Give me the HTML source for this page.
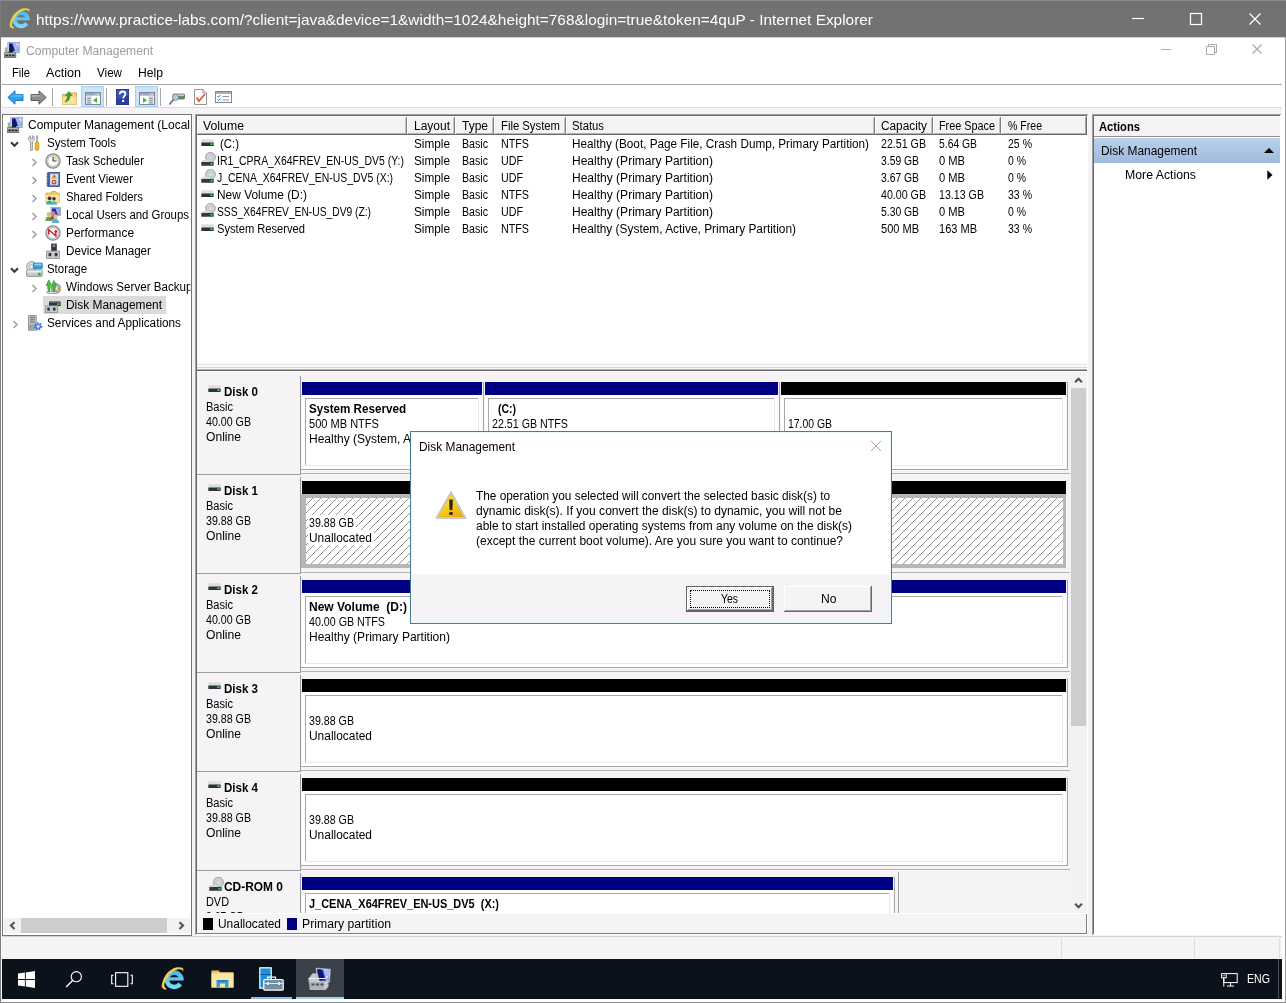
<!DOCTYPE html>
<html lang="en"><head><meta charset="utf-8"><title>Computer Management - Disk Management</title>
<style>
html,body{margin:0;padding:0}
body{width:1286px;height:1003px;position:relative;overflow:hidden;background:#fff;font-family:"Liberation Sans",sans-serif;font-size:12px;color:#000}
#r div,#r span,#r svg{position:absolute}
#r{position:absolute;left:0;top:0;width:1286px;height:1003px;overflow:hidden;will-change:transform}
.t{white-space:pre;line-height:20px;height:20px;transform-origin:0 50%}
</style></head>
<body><div id="r">
<div style="left:0px;top:0px;width:1286px;height:37px;background:#727272;"></div>
<div style="left:0px;top:0px;width:1286px;height:1px;background:#8a8a8a;"></div>
<div style="left:0px;top:37px;width:1286px;height:1px;background:#d2d2d2;"></div>
<div style="left:2px;top:108px;width:1280px;height:851px;background:#f5f3f5;"></div>
<div style="left:2px;top:84px;width:1280px;height:1px;background:#a5a5a5;"></div>
<div style="left:2px;top:107px;width:1280px;height:1px;background:#dcdcdc;"></div>
<div style="left:0px;top:0px;width:1px;height:1003px;background:#7d7d7d;"></div>
<div style="left:1285px;top:37px;width:1px;height:966px;background:#9a9a9a;"></div>
<div style="left:0px;top:1002px;width:1286px;height:1px;background:#8f8f8f;"></div>
<svg style="left:8.6px;top:7px" width="22" height="22" viewBox="0 0 24 24"><defs><linearGradient id="ieg1" x1="0" y1="0" x2="0" y2="1"><stop offset="0" stop-color="#46b2ec"/><stop offset="1" stop-color="#7ddffb"/></linearGradient></defs><path fill-rule="evenodd" d="M20.980 19.150A9.500 9.500 0 1 1 22.670 14.500H8.260A5 5 0 0 0 17.300 16.570ZM8.810 11.300A5 5 0 0 1 17.590 11.300Z" fill="url(#ieg1)"/><path d="M4.600 23.800C1.500 23 0 21 .9 18.300 2 13 4 10 5.500 8.100 9 4 14 1 17.300 1.400 20 1.200 22.500 2 22.400 3.600L22 5.800C21.800 4 20.500 3 18 3.200 14 3.600 10 6.500 7.800 9.700 5 13.500 3.500 16 3.300 18.500 3.100 20.500 3.800 22 5.800 22.400Z" fill="#f0cf4a"/></svg>
<span class="t" style="left:36px;top:10.3px;font-size:15px;color:#fff;transform:scaleX(1.0267);">https://www.practice-labs.com/?client=java&amp;device=1&amp;width=1024&amp;height=768&amp;login=true&amp;token=4quP - Internet Explorer</span>
<svg style="left:1128px;top:8px" width="20" height="20" viewBox="0 0 20 20"><path d="M4 10.500h12" stroke="#fff" stroke-width="1.200" fill="none"/></svg>
<svg style="left:1186px;top:9px" width="20" height="20" viewBox="0 0 20 20"><rect x="4.500" y="4.500" width="11" height="11" stroke="#fff" stroke-width="1.200" fill="none"/></svg>
<svg style="left:1245px;top:9px" width="20" height="20" viewBox="0 0 20 20"><path d="M4.500 4.500l11 11M15.500 4.500l-11 11" stroke="#fff" stroke-width="1.200" fill="none"/></svg>
<span class="t" style="left:26px;top:41px;color:#9c9c9c;transform:scaleX(1.0073);">Computer Management</span>
<svg style="left:1156px;top:40px" width="20" height="20" viewBox="0 0 20 20"><path d="M5 9.500h10" stroke="#b0b0b0" stroke-width="1" fill="none"/></svg>
<svg style="left:1201px;top:39px" width="20" height="20" viewBox="0 0 20 20"><path d="M5.500 7.500h8v8h-8zM7.500 7.500v-2h8v8h-2" stroke="#a8a8a8" stroke-width="1" fill="none"/></svg>
<svg style="left:1247px;top:39px" width="20" height="20" viewBox="0 0 20 20"><path d="M5.500 5.500l9 9M14.500 5.500l-9 9" stroke="#a8a8a8" stroke-width="1.150" fill="none"/></svg>
<svg style="left:4px;top:42.3px" width="16" height="16" viewBox="0 0 16 16"><rect x="3.800" y="0.400" width="12" height="10.200" fill="#d3dbee" stroke="#98a2ba" stroke-width=".8"/><rect x="5.200" y="1.600" width="9.400" height="7.600" fill="#2236c4"/><path d="M8.600 1.600h6v7.600h-3.600z" fill="#a4b8f0"/><path d="M11.500 1.600h3.100v3.500z" fill="#dfe7fb"/><path d="M5.200 1.600h2.600l2 5-2.600 2.600h-2z" fill="#0a1684"/><path d="M9.800 7.200C7 8 4.500 9.300 3 11.200h5.500c.2-1.400.9-2.500 2.300-3.200z" fill="#1a1c22"/><rect x="0.800" y="5.400" width="2.400" height="5.400" fill="#9db592"/><rect x="0.300" y="10.800" width="11.500" height="4.900" fill="#8d939b" stroke="#5c626a" stroke-width=".7"/><path d="M0.700 11.400h10.700" stroke="#c8ccd2" stroke-width=".8"/><rect x="1.600" y="12.600" width="2.200" height="1.600" fill="#23262c"/><rect x="4.900" y="12.600" width="2.200" height="1.600" fill="#23262c"/><rect x="8.200" y="12.600" width="2.200" height="1.600" fill="#23262c"/></svg>
<svg style="left:7px;top:90px" width="17" height="15" viewBox="0 0 17 15"><path d="M8 0.800v3.700h8v6H8v3.700L0.800 7.500z" fill="#2ea3ee" stroke="#1c78c8" stroke-width="1" stroke-linejoin="round"/><path d="M8 4.800h7.500v2H3.500z" fill="#7fd0ff" opacity=".55"/></svg>
<svg style="left:30px;top:90px" width="17" height="15" viewBox="0 0 17 15"><path d="M9 0.800v3.700h-8v6h8v3.700l7.200-6.700z" fill="#8e8e8e" stroke="#5c5c5c" stroke-width="1" stroke-linejoin="round"/><path d="M1.500 4.800h8v2h-8z" fill="#c4c4c4" opacity=".55"/></svg>
<div style="left:52px;top:88px;width:1px;height:18px;background:#a8a8a8;"></div>
<svg style="left:62px;top:91px" width="15" height="14" viewBox="0 0 15 14"><path d="M0.500 3.500h5l1.500-1.500h7.500v11.500h-14z" fill="#f3d679" stroke="#c9a545" stroke-width=".9"/><path d="M0.500 6h14v7.500h-14z" fill="#f7e3a0"/><path d="M3 11c3.500-.5 5-3 5-6.500l2.200 0-3.400-4-3.400 4h2c0 2.500-.8 4.500-2.400 6.500z" fill="#3aa63a" stroke="#1f7a1f" stroke-width=".5"/></svg>
<div style="left:81px;top:86px;width:23px;height:21px;background:#cce4f7;box-shadow:0 0 0 1px #a6d0f0 inset;"></div>
<svg style="left:85px;top:92px" width="16" height="13" viewBox="0 0 16 13"><rect x="0.500" y="0.500" width="15" height="12" fill="#fff" stroke="#7f8a96" stroke-width="1"/><rect x="1" y="1" width="14" height="2.600" fill="#9aa7b6"/><path d="M10.500 2h1M12.500 2h1.500" stroke="#fff" stroke-width="1"/><rect x="2" y="5" width="4" height="6.500" fill="#e6eaee" stroke="#8a95a2" stroke-width=".6"/><path d="M2.800 6.500h2.400M2.800 8.300h2.400M2.800 10.100h2.400" stroke="#6a7684" stroke-width=".8"/><path d="M12 5.500v5.500l-4-2.750z" fill="#3db53d"/></svg>
<div style="left:106px;top:88px;width:1px;height:18px;background:#a8a8a8;"></div>
<svg style="left:116px;top:89px" width="13" height="16" viewBox="0 0 13 16"><rect x="0.400" y="0.400" width="12.200" height="15.200" fill="#2b3ea6" stroke="#1a2870" stroke-width=".8"/><path d="M0.800 0.800h11.400v6l-11.400 3z" fill="#4a62c8" opacity=".6"/><path d="M3.800 5.200c0-1.800 1.200-2.700 2.800-2.700s2.800 1 2.800 2.500c0 2-2.200 2.100-2.200 4.400" stroke="#fff" stroke-width="1.800" fill="none"/><rect x="6.100" y="11" width="2" height="2" fill="#fff"/></svg>
<div style="left:135px;top:86px;width:23px;height:21px;background:#cce4f7;box-shadow:0 0 0 1px #a6d0f0 inset;"></div>
<svg style="left:139px;top:92px" width="16" height="13" viewBox="0 0 16 13"><rect x="0.500" y="0.500" width="15" height="12" fill="#fff" stroke="#7f8a96" stroke-width="1"/><rect x="1" y="1" width="14" height="2.600" fill="#9aa7b6"/><path d="M10.500 2h1M12.500 2h1.500" stroke="#fff" stroke-width="1"/><rect x="10" y="5" width="4" height="6.500" fill="#e6eaee" stroke="#8a95a2" stroke-width=".6"/><path d="M10.800 6.500h2.400M10.800 8.300h2.400M10.800 10.100h2.400" stroke="#6a7684" stroke-width=".8"/><path d="M4 5.500v5.500l4-2.750z" fill="#3db53d"/></svg>
<div style="left:160px;top:88px;width:1px;height:18px;background:#a8a8a8;"></div>
<svg style="left:169px;top:93px" width="16" height="12" viewBox="0 0 16 12"><rect x="4" y="1" width="11.500" height="5" rx=".8" fill="#6f7a74" stroke="#4a524e" stroke-width=".6"/><rect x="4.500" y="1.400" width="10.500" height="1.600" fill="#c9cfcc"/><rect x="11.500" y="3.400" width="2.600" height="1.800" fill="#29c229"/><circle cx="6.500" cy="4.500" r="3" fill="#cfe4f4" fill-opacity=".75" stroke="#7a8a96" stroke-width="1"/><path d="M4.300 6.800L0.800 11" stroke="#5a6670" stroke-width="1.500" stroke-linecap="round"/></svg>
<svg style="left:194px;top:89px" width="13" height="16" viewBox="0 0 13 16"><path d="M0.500 0.500h8.500l3.500 3.500v11.500h-12z" fill="#fff" stroke="#8a8a8a" stroke-width=".9"/><path d="M9 0.500v3.500h3.500" fill="#e8e8e8" stroke="#8a8a8a" stroke-width=".8"/><path d="M2.500 8.500l2.500 3.500 6-7" stroke="#e0552a" stroke-width="1.700" fill="none"/></svg>
<svg style="left:215px;top:91px" width="17" height="12" viewBox="0 0 17 12"><rect x="0.500" y="0.500" width="16" height="11" fill="#fff" stroke="#7f8a96" stroke-width="1"/><rect x="1" y="1" width="15" height="1.800" fill="#9aa7b6"/><path d="M2.500 5l1 1.200 1.800-2.200M2.500 8.500l1 1.200 1.800-2.200" stroke="#2c6fd0" stroke-width="1" fill="none"/><path d="M7.500 5.500h6.500M7.500 9h6.500" stroke="#8a95a2" stroke-width="1"/></svg>
<span class="t" style="left:12px;top:63px;transform:scaleX(0.9305);">File</span>
<span class="t" style="left:46px;top:63px;transform:scaleX(1.0492);">Action</span>
<span class="t" style="left:97px;top:63px;transform:scaleX(0.9691);">View</span>
<span class="t" style="left:138px;top:63px;transform:scaleX(1.0127);">Help</span>
<div style="left:2px;top:114px;width:190px;height:822px;background:#747474;"></div>
<div style="left:3px;top:115px;width:188px;height:820px;background:#fff;"></div>
<div style="left:195px;top:114px;width:893px;height:821px;background:#a0a0a0;"></div>
<div style="left:196px;top:115px;width:892px;height:820px;background:#fff;"></div>
<div style="left:196px;top:115px;width:891px;height:819px;background:#696969;"></div>
<div style="left:197px;top:116px;width:890px;height:818px;background:#fff;"></div>
<div style="left:1092px;top:114px;width:189px;height:821px;background:#a0a0a0;"></div>
<div style="left:1093px;top:115px;width:188px;height:820px;background:#fff;"></div>
<div style="left:1093px;top:115px;width:187px;height:819px;background:#696969;"></div>
<div style="left:1094px;top:116px;width:186px;height:818px;background:#fff;"></div>
<div style="left:1281px;top:114px;width:4px;height:822px;background:#fff;"></div>
<span class="t" style="left:28px;top:114.5px;transform:scaleX(0.9994);clip-path:inset(0 0.0px 0 0);">Computer Management (Local</span>
<svg style="left:7px;top:117.0px" width="16" height="16" viewBox="0 0 16 16"><rect x="3.800" y="0.400" width="12" height="10.200" fill="#d3dbee" stroke="#98a2ba" stroke-width=".8"/><rect x="5.200" y="1.600" width="9.400" height="7.600" fill="#2236c4"/><path d="M8.600 1.600h6v7.600h-3.600z" fill="#a4b8f0"/><path d="M11.500 1.600h3.100v3.500z" fill="#dfe7fb"/><path d="M5.200 1.600h2.600l2 5-2.600 2.600h-2z" fill="#0a1684"/><path d="M9.800 7.200C7 8 4.500 9.300 3 11.200h5.500c.2-1.400.9-2.500 2.300-3.200z" fill="#1a1c22"/><rect x="0.800" y="5.400" width="2.400" height="5.400" fill="#9db592"/><rect x="0.300" y="10.800" width="11.500" height="4.900" fill="#8d939b" stroke="#5c626a" stroke-width=".7"/><path d="M0.700 11.400h10.700" stroke="#c8ccd2" stroke-width=".8"/><rect x="1.600" y="12.600" width="2.200" height="1.600" fill="#23262c"/><rect x="4.900" y="12.600" width="2.200" height="1.600" fill="#23262c"/><rect x="8.200" y="12.600" width="2.200" height="1.600" fill="#23262c"/></svg>
<span class="t" style="left:47px;top:132.5px;transform:scaleX(0.9699);">System Tools</span>
<svg style="left:28px;top:135.0px" width="12" height="16" viewBox="0 0 12 16"><path d="M2.600 15.300V6.800C1.300 6.200.6 5 .6 3.600.6 2.300 1.300 1.200 2.400.7v3h2.200v-3c1.100.5 1.800 1.600 1.800 2.900 0 1.400-.7 2.600-2 3.200v8.500z" fill="#e4e6e8" stroke="#7c8288" stroke-width=".8"/><rect x="8.300" y="0.500" width="1.400" height="7" fill="#8c9298"/><rect x="7.200" y="7" width="3.600" height="8.300" rx="1.200" fill="#f2b818" stroke="#b58608" stroke-width=".7"/></svg>
<svg style="left:9px;top:138.5px" width="11" height="11" viewBox="0 0 11 11"><path d="M2 3.300l3.500 3.500 3.500-3.500" stroke="#383838" stroke-width="2.100" fill="none"/></svg>
<span class="t" style="left:66px;top:150.5px;transform:scaleX(0.9507);">Task Scheduler</span>
<svg style="left:45px;top:153.0px" width="16" height="16" viewBox="0 0 16 16"><circle cx="8" cy="8" r="7.100" fill="#dfe1e4" stroke="#858a90" stroke-width="1.300"/><circle cx="8" cy="8" r="5.300" fill="#fff" stroke="#a8adb4" stroke-width=".8"/><path d="M8 8V2.700A5.300 5.300 0 0 1 13.300 8z" fill="#f6dca6"/><path d="M8 3.800V8h3.400" stroke="#3a4048" stroke-width="1.100" fill="none"/></svg>
<svg style="left:28.5px;top:157.0px" width="11" height="11" viewBox="0 0 11 11"><path d="M3.500 2l3.500 3.500-3.500 3.500" stroke="#a2a2a2" stroke-width="1.600" fill="none"/></svg>
<span class="t" style="left:66px;top:168.5px;transform:scaleX(0.9506);">Event Viewer</span>
<svg style="left:46px;top:171.5px" width="14" height="15" viewBox="0 0 14 15"><rect x="1.800" y="0.500" width="11.700" height="14" fill="#4f74c4" stroke="#2c4a94" stroke-width=".8"/><rect x="4.200" y="1.800" width="8" height="11.400" fill="#dfe7f7"/><path d="M0.500 2.500h3M0.500 4.700h3M0.500 6.900h3M0.500 9.100h3M0.500 11.300h3M0.500 13.200h3" stroke="#46506a" stroke-width=".9"/><path d="M5 10h6.500M5 12h6.500" stroke="#8fa6d8" stroke-width=".7"/><path d="M8.200 2l2.600 4.600h-5.200z" fill="#f4cf2a" stroke="#b89612" stroke-width=".4"/><rect x="7.800" y="3.500" width=".9" height="2" fill="#222"/><rect x="6" y="8" width="4.200" height="4.200" rx=".8" fill="#d83a3a"/><path d="M7.100 9.100l2 2M9.100 9.100l-2 2" stroke="#fff" stroke-width=".8"/></svg>
<svg style="left:28.5px;top:175.0px" width="11" height="11" viewBox="0 0 11 11"><path d="M3.500 2l3.500 3.500-3.500 3.500" stroke="#a2a2a2" stroke-width="1.600" fill="none"/></svg>
<span class="t" style="left:66px;top:186.5px;transform:scaleX(0.9385);">Shared Folders</span>
<svg style="left:45px;top:190.0px" width="15" height="15" viewBox="0 0 15 15"><path d="M1 3.200h4.500l1.200-1.600h4l1 1.600h2.500v9.600H1z" fill="#f0cf72" stroke="#c29a3a" stroke-width=".8"/><path d="M1 5h13.200v7.800H1z" fill="#f8e09a"/><circle cx="4.600" cy="8.300" r="1.900" fill="#2e3e3e"/><path d="M1.200 14.600c0-2.600 1.500-3.800 3.400-3.800s3.400 1.200 3.400 3.800z" fill="#3aa89a"/><circle cx="9" cy="8.800" r="1.800" fill="#2e3e3e"/><path d="M5.800 14.800c0-2.400 1.400-3.600 3.200-3.600s3.200 1.200 3.200 3.600z" fill="#4ab8d8"/></svg>
<svg style="left:28.5px;top:193.0px" width="11" height="11" viewBox="0 0 11 11"><path d="M3.500 2l3.500 3.500-3.500 3.500" stroke="#a2a2a2" stroke-width="1.600" fill="none"/></svg>
<span class="t" style="left:66px;top:204.5px;transform:scaleX(0.9505);clip-path:inset(0 0.0px 0 0);">Local Users and Groups</span>
<svg style="left:45px;top:206.5px" width="16" height="16" viewBox="0 0 16 16"><rect x="6" y="0.500" width="9.500" height="8" fill="#c9d3e8" stroke="#8a93a8" stroke-width=".7"/><rect x="7" y="1.400" width="7.600" height="6.200" fill="#1c2fb0"/><path d="M10.500 1.400h4.100v6.200h-2z" fill="#9db4ec"/><circle cx="4" cy="7.200" r="2.200" fill="#e0b48a"/><path d="M0.300 14c0-3 1.600-4.400 3.700-4.400s3.700 1.400 3.700 4.400z" fill="#5aa84a"/><circle cx="8.300" cy="6.400" r="2.200" fill="#c88a6a"/><path d="M5 12.500c0-2.600 1.400-3.800 3.300-3.800s3.300 1.200 3.300 3.800z" fill="#8a5a4a"/><circle cx="10.500" cy="10" r="2.100" fill="#e8c4a0"/><path d="M6.800 16c0-2.800 1.600-4 3.700-4s3.700 1.200 3.700 4z" fill="#5ab0e0"/></svg>
<svg style="left:28.5px;top:211.0px" width="11" height="11" viewBox="0 0 11 11"><path d="M3.500 2l3.500 3.500-3.500 3.500" stroke="#a2a2a2" stroke-width="1.600" fill="none"/></svg>
<span class="t" style="left:66px;top:222.5px;transform:scaleX(0.9898);">Performance</span>
<svg style="left:45px;top:225.0px" width="16" height="16" viewBox="0 0 16 16"><circle cx="8" cy="8" r="7.100" fill="#e4e6e8" stroke="#858a90" stroke-width="1.300"/><circle cx="8" cy="8" r="5.300" fill="#fff" stroke="#a8adb4" stroke-width=".8"/><path d="M3.800 9.500V4.800l7 6V6.500" stroke="#d42222" stroke-width="1.500" fill="none" stroke-linejoin="miter"/><path d="M8.800 7.200l2-2.800 2 2.800z" fill="#d42222"/></svg>
<svg style="left:28.5px;top:229.0px" width="11" height="11" viewBox="0 0 11 11"><path d="M3.500 2l3.500 3.500-3.500 3.500" stroke="#a2a2a2" stroke-width="1.600" fill="none"/></svg>
<span class="t" style="left:66px;top:240.5px;transform:scaleX(0.9728);">Device Manager</span>
<svg style="left:46px;top:243.0px" width="14" height="16" viewBox="0 0 14 16"><rect x="5.200" y="0.600" width="5.600" height="8" fill="#2e3238"/><rect x="6.800" y="1.500" width="2.400" height="2.600" fill="#8a9098"/><rect x="0.600" y="8" width="12.800" height="7.400" fill="#c4c8cc" stroke="#8a8e94" stroke-width=".8"/><rect x="2.600" y="10" width="2.600" height="3.200" fill="#2e3238"/><rect x="8.800" y="10" width="2.600" height="3.200" fill="#2e3238"/></svg>
<span class="t" style="left:47px;top:258.5px;transform:scaleX(0.9517);">Storage</span>
<svg style="left:26px;top:261.0px" width="17" height="16" viewBox="0 0 17 16"><circle cx="5.600" cy="5.600" r="5.100" fill="#d4d6d8" stroke="#8e9296" stroke-width=".8"/><circle cx="5.600" cy="5.600" r="1.700" fill="#fff" stroke="#9a9ea2" stroke-width=".6"/><rect x="7.500" y="2" width="8.800" height="5.800" rx=".8" fill="#2f9fe0" stroke="#1a70b0" stroke-width=".7"/><rect x="8.200" y="2.600" width="7.400" height="1.800" fill="#8fd0f6"/><rect x="0.600" y="9" width="15.600" height="6.400" rx="1" fill="#c6cacc" stroke="#7e8286" stroke-width=".8"/><rect x="1.200" y="9.500" width="14.400" height="2" fill="#eceeee"/><rect x="12" y="11.800" width="2.600" height="2.600" fill="#3aa83a"/></svg>
<svg style="left:9px;top:264.5px" width="11" height="11" viewBox="0 0 11 11"><path d="M2 3.300l3.500 3.500 3.500-3.500" stroke="#383838" stroke-width="2.100" fill="none"/></svg>
<span class="t" style="left:66px;top:276.5px;transform:scaleX(0.9677);clip-path:inset(0 2.3px 0 0);">Windows Server Backup</span>
<svg style="left:45px;top:279.0px" width="16" height="16" viewBox="0 0 16 16"><circle cx="11" cy="9.500" r="4.800" fill="#b8bcc0" stroke="#70757a" stroke-width=".8"/><path d="M11 9.500l4.500-1.500a4.800 4.800 0 0 1-1 4.600z" fill="#e0a050"/><circle cx="11" cy="9.500" r="1.300" fill="#fff"/><path d="M2.500 14.500h9l1-2h-11z" fill="#d8dcde" stroke="#80858a" stroke-width=".6"/><path d="M1 6.500L3.800 1l2.400 4.500-1.200 0c.4 2.600.2 5-1 7.500-1-1.500-1.600-4-1.200-6.500z" fill="#4cbf3c" stroke="#248a1c" stroke-width=".6"/><path d="M6.300 7L9 1.500l2.400 4.500-1.200 0c.4 2.600.2 4.600-1 7-1-1.500-1.600-3.600-1.200-6z" fill="#4cbf3c" stroke="#248a1c" stroke-width=".6"/></svg>
<svg style="left:28.5px;top:283.0px" width="11" height="11" viewBox="0 0 11 11"><path d="M3.500 2l3.500 3.500-3.500 3.500" stroke="#a2a2a2" stroke-width="1.600" fill="none"/></svg>
<div style="left:43px;top:296.0px;width:123px;height:18px;background:#dbdbdb;"></div>
<span class="t" style="left:66px;top:294.5px;transform:scaleX(0.9926);">Disk Management</span>
<svg style="left:45px;top:301.0px" width="16" height="12" viewBox="0 0 16 12"><rect x="4" y="0.400" width="11.600" height="4.600" rx=".6" fill="#2c3034"/><rect x="4.600" y="0.900" width="10.400" height="1.200" fill="#5a6066"/><rect x="12" y="2.400" width="2.600" height="1.700" fill="#2fcf2f"/><rect x="0.500" y="4.800" width="12" height="6.800" fill="#c4c8cc" stroke="#8a8e94" stroke-width=".8"/><rect x="2.300" y="6.600" width="2.500" height="3" fill="#2e3238"/><rect x="8" y="6.600" width="2.500" height="3" fill="#2e3238"/></svg>
<span class="t" style="left:47px;top:312.5px;transform:scaleX(0.9799);">Services and Applications</span>
<svg style="left:28px;top:315.0px" width="15" height="16" viewBox="0 0 15 16"><rect x="0.600" y="0.600" width="7.600" height="14.600" fill="#c2c6ca" stroke="#7e8286" stroke-width=".8"/><path d="M2 2.600h4.800M2 4.800h4.800M2 7h4.800" stroke="#5e6468" stroke-width="1"/><rect x="1.200" y="9.500" width="6.400" height="5" fill="#9aa0a6"/><circle cx="10.200" cy="11.400" r="3" fill="none" stroke="#3d78d8" stroke-width="2.200" stroke-dasharray="1.500 1.050"/><circle cx="10.200" cy="11.400" r="2.400" fill="#6fa0ec" stroke="#3d78d8" stroke-width=".8"/><circle cx="10.200" cy="11.400" r="1.100" fill="#fff"/></svg>
<svg style="left:9.5px;top:319.0px" width="11" height="11" viewBox="0 0 11 11"><path d="M3.500 2l3.500 3.500-3.500 3.500" stroke="#a2a2a2" stroke-width="1.600" fill="none"/></svg>
<div style="left:4px;top:918px;width:186px;height:15px;background:#f3f1f3;"></div>
<div style="left:21px;top:918px;width:146px;height:15px;background:#cdcdcd;"></div>
<svg style="left:7px;top:920px" width="11" height="11" viewBox="0 0 11 11"><path d="M7.500 2.200l-3.600 3.400 3.600 3.400" stroke="#505050" stroke-width="2" fill="none"/></svg>
<svg style="left:176px;top:920px" width="11" height="11" viewBox="0 0 11 11"><path d="M3.500 2.200l3.600 3.400-3.600 3.400" stroke="#505050" stroke-width="2" fill="none"/></svg>
<div style="left:197px;top:116px;width:890px;height:18px;background:#f5f3f5;"></div>
<div style="left:197px;top:116px;width:890px;height:1px;background:#fff;"></div>
<div style="left:197px;top:116px;width:1px;height:18px;background:#fff;"></div>
<div style="left:197px;top:134px;width:890px;height:1px;background:#696969;"></div>
<div style="left:198px;top:133px;width:888px;height:1px;background:#b4b4b4;"></div>
<span class="t" style="left:203px;top:115.5px;transform:scaleX(1.0242);">Volume</span>
<span class="t" style="left:414px;top:115.5px;transform:scaleX(0.9991);">Layout</span>
<div style="left:405px;top:118px;width:1px;height:15px;background:#c4c4c4;"></div>
<div style="left:406px;top:117px;width:1px;height:17px;background:#808080;"></div>
<div style="left:407px;top:117px;width:1px;height:17px;background:#fff;"></div>
<span class="t" style="left:462px;top:115.5px;transform:scaleX(0.9994);">Type</span>
<div style="left:453px;top:118px;width:1px;height:15px;background:#c4c4c4;"></div>
<div style="left:454px;top:117px;width:1px;height:17px;background:#808080;"></div>
<div style="left:455px;top:117px;width:1px;height:17px;background:#fff;"></div>
<span class="t" style="left:501px;top:115.5px;transform:scaleX(0.9412);">File System</span>
<div style="left:492px;top:118px;width:1px;height:15px;background:#c4c4c4;"></div>
<div style="left:493px;top:117px;width:1px;height:17px;background:#808080;"></div>
<div style="left:494px;top:117px;width:1px;height:17px;background:#fff;"></div>
<span class="t" style="left:572px;top:115.5px;transform:scaleX(0.9403);">Status</span>
<div style="left:564px;top:118px;width:1px;height:15px;background:#c4c4c4;"></div>
<div style="left:565px;top:117px;width:1px;height:17px;background:#808080;"></div>
<div style="left:566px;top:117px;width:1px;height:17px;background:#fff;"></div>
<span class="t" style="left:881px;top:115.5px;transform:scaleX(0.9853);">Capacity</span>
<div style="left:873px;top:118px;width:1px;height:15px;background:#c4c4c4;"></div>
<div style="left:874px;top:117px;width:1px;height:17px;background:#808080;"></div>
<div style="left:875px;top:117px;width:1px;height:17px;background:#fff;"></div>
<span class="t" style="left:939px;top:115.5px;transform:scaleX(0.9025);">Free Space</span>
<div style="left:931px;top:118px;width:1px;height:15px;background:#c4c4c4;"></div>
<div style="left:932px;top:117px;width:1px;height:17px;background:#808080;"></div>
<div style="left:933px;top:117px;width:1px;height:17px;background:#fff;"></div>
<span class="t" style="left:1008px;top:115.5px;transform:scaleX(0.8788);">% Free</span>
<div style="left:999px;top:118px;width:1px;height:15px;background:#c4c4c4;"></div>
<div style="left:1000px;top:117px;width:1px;height:17px;background:#808080;"></div>
<div style="left:1001px;top:117px;width:1px;height:17px;background:#fff;"></div>
<div style="left:1085px;top:117px;width:1px;height:17px;background:#a8a8a8;"></div>
<div style="left:1086px;top:116px;width:1px;height:19px;background:#696969;"></div>
<span class="t" style="left:220px;top:133.5px;transform:scaleX(0.9500);">(C:)</span>
<svg style="left:200.8px;top:139.3px" width="13" height="8" viewBox="0 0 13 8"><rect x="0.300" y="0.200" width="12.400" height="3.800" rx=".6" fill="#dcdedf"/><rect x="0.300" y="3.500" width="12.400" height="3.400" rx=".4" fill="#2e3236"/><rect x="9.200" y="4.300" width="2.500" height="1.700" fill="#2fd42f"/></svg>
<span class="t" style="left:414px;top:133.5px;transform:scaleX(0.9813);">Simple</span>
<span class="t" style="left:462px;top:133.5px;transform:scaleX(0.8860);">Basic</span>
<span class="t" style="left:501px;top:133.5px;transform:scaleX(0.8933);">NTFS</span>
<span class="t" style="left:572px;top:133.5px;transform:scaleX(0.9787);">Healthy (Boot, Page File, Crash Dump, Primary Partition)</span>
<span class="t" style="left:881px;top:133.5px;transform:scaleX(0.8875);">22.51 GB</span>
<span class="t" style="left:939px;top:133.5px;transform:scaleX(0.8630);">5.64 GB</span>
<span class="t" style="left:1008px;top:133.5px;transform:scaleX(0.8772);">25 %</span>
<span class="t" style="left:217px;top:150.5px;transform:scaleX(0.8708);">IR1_CPRA_X64FREV_EN-US_DV5 (Y:)</span>
<svg style="left:201px;top:151.5px" width="15" height="15" viewBox="0 0 15 15"><circle cx="9.500" cy="5.300" r="4.900" fill="#d2d4d6" stroke="#8e9296" stroke-width=".8"/><circle cx="9.500" cy="5.300" r="2.400" fill="#eef0f0" stroke="#a2a6aa" stroke-width=".5"/><circle cx="9.500" cy="5.300" r="1" fill="#fff" stroke="#8e9296" stroke-width=".5"/><path d="M1.500 8h6l1.500 2.400h-9z" fill="#d6d8da"/><rect x="0.300" y="10" width="12.400" height="3.800" rx=".5" fill="#34383c"/><rect x="9.300" y="10.900" width="2.400" height="1.700" fill="#2fcf2f"/></svg>
<span class="t" style="left:414px;top:150.5px;transform:scaleX(0.9813);">Simple</span>
<span class="t" style="left:462px;top:150.5px;transform:scaleX(0.8860);">Basic</span>
<span class="t" style="left:501px;top:150.5px;transform:scaleX(0.8917);">UDF</span>
<span class="t" style="left:572px;top:150.5px;transform:scaleX(1.0021);">Healthy (Primary Partition)</span>
<span class="t" style="left:881px;top:150.5px;transform:scaleX(0.8630);">3.59 GB</span>
<span class="t" style="left:939px;top:150.5px;transform:scaleX(0.9281);">0 MB</span>
<span class="t" style="left:1008px;top:150.5px;transform:scaleX(0.8701);">0 %</span>
<span class="t" style="left:217px;top:167.5px;transform:scaleX(0.8681);">J_CENA_X64FREV_EN-US_DV5 (X:)</span>
<svg style="left:201px;top:168.5px" width="15" height="15" viewBox="0 0 15 15"><circle cx="9.500" cy="5.300" r="4.900" fill="#d2d4d6" stroke="#8e9296" stroke-width=".8"/><circle cx="9.500" cy="5.300" r="2.400" fill="#eef0f0" stroke="#a2a6aa" stroke-width=".5"/><circle cx="9.500" cy="5.300" r="1" fill="#fff" stroke="#8e9296" stroke-width=".5"/><path d="M1.500 8h6l1.500 2.400h-9z" fill="#d6d8da"/><rect x="0.300" y="10" width="12.400" height="3.800" rx=".5" fill="#34383c"/><rect x="9.300" y="10.900" width="2.400" height="1.700" fill="#2fcf2f"/></svg>
<span class="t" style="left:414px;top:167.5px;transform:scaleX(0.9813);">Simple</span>
<span class="t" style="left:462px;top:167.5px;transform:scaleX(0.8860);">Basic</span>
<span class="t" style="left:501px;top:167.5px;transform:scaleX(0.8917);">UDF</span>
<span class="t" style="left:572px;top:167.5px;transform:scaleX(1.0021);">Healthy (Primary Partition)</span>
<span class="t" style="left:881px;top:167.5px;transform:scaleX(0.8630);">3.67 GB</span>
<span class="t" style="left:939px;top:167.5px;transform:scaleX(0.9281);">0 MB</span>
<span class="t" style="left:1008px;top:167.5px;transform:scaleX(0.8701);">0 %</span>
<span class="t" style="left:217px;top:184.5px;transform:scaleX(0.9922);">New Volume (D:)</span>
<svg style="left:200.8px;top:190.3px" width="13" height="8" viewBox="0 0 13 8"><rect x="0.300" y="0.200" width="12.400" height="3.800" rx=".6" fill="#dcdedf"/><rect x="0.300" y="3.500" width="12.400" height="3.400" rx=".4" fill="#2e3236"/><rect x="9.200" y="4.300" width="2.500" height="1.700" fill="#2fd42f"/></svg>
<span class="t" style="left:414px;top:184.5px;transform:scaleX(0.9813);">Simple</span>
<span class="t" style="left:462px;top:184.5px;transform:scaleX(0.8860);">Basic</span>
<span class="t" style="left:501px;top:184.5px;transform:scaleX(0.8933);">NTFS</span>
<span class="t" style="left:572px;top:184.5px;transform:scaleX(1.0021);">Healthy (Primary Partition)</span>
<span class="t" style="left:881px;top:184.5px;transform:scaleX(0.8875);">40.00 GB</span>
<span class="t" style="left:939px;top:184.5px;transform:scaleX(0.8875);">13.13 GB</span>
<span class="t" style="left:1008px;top:184.5px;transform:scaleX(0.8772);">33 %</span>
<span class="t" style="left:217px;top:201.5px;transform:scaleX(0.8553);">SSS_X64FREV_EN-US_DV9 (Z:)</span>
<svg style="left:201px;top:202.5px" width="15" height="15" viewBox="0 0 15 15"><circle cx="9.500" cy="5.300" r="4.900" fill="#d2d4d6" stroke="#8e9296" stroke-width=".8"/><circle cx="9.500" cy="5.300" r="2.400" fill="#eef0f0" stroke="#a2a6aa" stroke-width=".5"/><circle cx="9.500" cy="5.300" r="1" fill="#fff" stroke="#8e9296" stroke-width=".5"/><path d="M1.500 8h6l1.500 2.400h-9z" fill="#d6d8da"/><rect x="0.300" y="10" width="12.400" height="3.800" rx=".5" fill="#34383c"/><rect x="9.300" y="10.900" width="2.400" height="1.700" fill="#2fcf2f"/></svg>
<span class="t" style="left:414px;top:201.5px;transform:scaleX(0.9813);">Simple</span>
<span class="t" style="left:462px;top:201.5px;transform:scaleX(0.8860);">Basic</span>
<span class="t" style="left:501px;top:201.5px;transform:scaleX(0.8917);">UDF</span>
<span class="t" style="left:572px;top:201.5px;transform:scaleX(1.0021);">Healthy (Primary Partition)</span>
<span class="t" style="left:881px;top:201.5px;transform:scaleX(0.8630);">5.30 GB</span>
<span class="t" style="left:939px;top:201.5px;transform:scaleX(0.9281);">0 MB</span>
<span class="t" style="left:1008px;top:201.5px;transform:scaleX(0.8701);">0 %</span>
<span class="t" style="left:217px;top:218.5px;transform:scaleX(0.9292);">System Reserved</span>
<svg style="left:200.8px;top:224.3px" width="13" height="8" viewBox="0 0 13 8"><rect x="0.300" y="0.200" width="12.400" height="3.800" rx=".6" fill="#dcdedf"/><rect x="0.300" y="3.500" width="12.400" height="3.400" rx=".4" fill="#2e3236"/><rect x="9.200" y="4.300" width="2.500" height="1.700" fill="#2fd42f"/></svg>
<span class="t" style="left:414px;top:218.5px;transform:scaleX(0.9813);">Simple</span>
<span class="t" style="left:462px;top:218.5px;transform:scaleX(0.8860);">Basic</span>
<span class="t" style="left:501px;top:218.5px;transform:scaleX(0.8933);">NTFS</span>
<span class="t" style="left:572px;top:218.5px;transform:scaleX(0.9909);">Healthy (System, Active, Primary Partition)</span>
<span class="t" style="left:881px;top:218.5px;transform:scaleX(0.9188);">500 MB</span>
<span class="t" style="left:939px;top:218.5px;transform:scaleX(0.9188);">163 MB</span>
<span class="t" style="left:1008px;top:218.5px;transform:scaleX(0.8772);">33 %</span>
<div style="left:197px;top:363px;width:890px;height:9px;background:#fbfafb;"></div>
<div style="left:197px;top:364px;width:890px;height:1px;background:#e6e6e6;"></div>
<div style="left:197px;top:367px;width:890px;height:1px;background:#d6d6d6;"></div>
<div style="left:197px;top:369px;width:890px;height:1px;background:#b0b0b0;"></div>
<div style="left:197px;top:370px;width:890px;height:1px;background:#696969;"></div>
<div style="left:197px;top:371px;width:890px;height:1px;background:#fff;"></div>
<div style="left:197px;top:372px;width:873px;height:542px;background:#f5f3f5;"></div>
<span class="t" style="left:224px;top:381.5px;font-weight:bold;transform:scaleX(0.9616);">Disk 0</span>
<svg style="left:208.3px;top:385px" width="13" height="8" viewBox="0 0 13 8"><rect x="0.300" y="0.200" width="12.400" height="3.800" rx=".6" fill="#dcdedf"/><rect x="0.300" y="3.500" width="12.400" height="3.400" rx=".4" fill="#2e3236"/><rect x="9.200" y="4.300" width="2.500" height="1.700" fill="#2fd42f"/></svg>
<span class="t" style="left:206px;top:396.5px;transform:scaleX(0.9201);">Basic</span>
<span class="t" style="left:206px;top:411.5px;transform:scaleX(0.8875);">40.00 GB</span>
<span class="t" style="left:206px;top:426.5px;transform:scaleX(1.0090);">Online</span>
<div style="left:300px;top:376px;width:1px;height:99px;background:#9c9c9c;"></div>
<div style="left:197px;top:474px;width:103px;height:1px;background:#9c9c9c;"></div>
<div style="left:302px;top:382px;width:180px;height:13px;background:#000084;"></div>
<div style="left:302px;top:395px;width:180px;height:74px;background:#fff;"></div>
<div style="left:305px;top:398px;width:174px;height:1px;background:#a8a8a8;"></div>
<div style="left:305px;top:398px;width:1px;height:68px;background:#a8a8a8;"></div>
<div style="left:305px;top:465px;width:174px;height:1px;background:#e8e8e8;"></div>
<div style="left:478px;top:398px;width:1px;height:68px;background:#e8e8e8;"></div>
<div style="left:483px;top:382px;width:1px;height:87px;background:#a8a8a8;"></div>
<div style="left:301px;top:469px;width:183px;height:1px;background:#a8a8a8;"></div>
<span class="t" style="left:309px;top:398.5px;font-weight:bold;transform:scaleX(0.9694);">System Reserved</span>
<span class="t" style="left:309px;top:413.5px;transform:scaleX(0.9207);">500 MB NTFS</span>
<span class="t" style="left:309px;top:428.5px;clip-path:inset(0 57.1px 0 0);">Healthy (System, Active, Primary Partition)</span>
<div style="left:485px;top:382px;width:293px;height:13px;background:#000084;"></div>
<div style="left:485px;top:395px;width:293px;height:74px;background:#fff;"></div>
<div style="left:488px;top:398px;width:287px;height:1px;background:#a8a8a8;"></div>
<div style="left:488px;top:398px;width:1px;height:68px;background:#a8a8a8;"></div>
<div style="left:488px;top:465px;width:287px;height:1px;background:#e8e8e8;"></div>
<div style="left:774px;top:398px;width:1px;height:68px;background:#e8e8e8;"></div>
<div style="left:779px;top:382px;width:1px;height:87px;background:#a8a8a8;"></div>
<div style="left:484px;top:469px;width:296px;height:1px;background:#a8a8a8;"></div>
<span class="t" style="left:498px;top:398.5px;font-weight:bold;transform:scaleX(0.8714);">(C:)</span>
<span class="t" style="left:492px;top:413.5px;transform:scaleX(0.8902);">22.51 GB NTFS</span>
<span class="t" style="left:492px;top:428.5px;clip-path:inset(0 21.4px 0 0);">Healthy (Boot, Page File, Crash Dump, Primary Partition)</span>
<div style="left:781px;top:382px;width:285px;height:13px;background:#000;"></div>
<div style="left:781px;top:395px;width:285px;height:74px;background:#fff;"></div>
<div style="left:784px;top:398px;width:279px;height:1px;background:#a8a8a8;"></div>
<div style="left:784px;top:398px;width:1px;height:68px;background:#a8a8a8;"></div>
<div style="left:784px;top:465px;width:279px;height:1px;background:#e8e8e8;"></div>
<div style="left:1062px;top:398px;width:1px;height:68px;background:#e8e8e8;"></div>
<div style="left:1067px;top:382px;width:1px;height:87px;background:#a8a8a8;"></div>
<div style="left:780px;top:469px;width:288px;height:1px;background:#a8a8a8;"></div>
<span class="t" style="left:788px;top:413.5px;transform:scaleX(0.8678);">17.00 GB</span>
<span class="t" style="left:788px;top:428.5px;transform:scaleX(0.9941);">Unallocated</span>
<div style="left:301px;top:473px;width:769px;height:1px;background:#b4b4b4;"></div>
<span class="t" style="left:224px;top:480.5px;font-weight:bold;transform:scaleX(0.9616);">Disk 1</span>
<svg style="left:208.3px;top:484px" width="13" height="8" viewBox="0 0 13 8"><rect x="0.300" y="0.200" width="12.400" height="3.800" rx=".6" fill="#dcdedf"/><rect x="0.300" y="3.500" width="12.400" height="3.400" rx=".4" fill="#2e3236"/><rect x="9.200" y="4.300" width="2.500" height="1.700" fill="#2fd42f"/></svg>
<span class="t" style="left:206px;top:495.5px;transform:scaleX(0.9201);">Basic</span>
<span class="t" style="left:206px;top:510.5px;transform:scaleX(0.8875);">39.88 GB</span>
<span class="t" style="left:206px;top:525.5px;transform:scaleX(1.0090);">Online</span>
<div style="left:300px;top:477px;width:1px;height:97px;background:#9c9c9c;"></div>
<div style="left:197px;top:573px;width:103px;height:1px;background:#9c9c9c;"></div>
<div style="left:302px;top:481px;width:764px;height:13px;background:#000;"></div>
<div style="left:302px;top:494px;width:764px;height:74px;background:#fff;"></div>
<div style="left:301px;top:494px;width:765px;height:74px;background:#b6b6b6;"></div>
<div style="left:305.5px;top:498px;width:757px;height:66px;background:#fff repeating-linear-gradient(135deg,#fff 0,#fff 4.700px,#969696 4.900px,#969696 5.500px,#fff 5.657px)"></div>
<div style="left:308px;top:515.0px;width:48px;height:15px;background:#fff;"></div>
<div style="left:308px;top:530.0px;width:66px;height:15px;background:#fff;"></div>
<span class="t" style="left:309px;top:512.5px;transform:scaleX(0.8875);">39.88 GB</span>
<span class="t" style="left:309px;top:527.5px;transform:scaleX(0.9941);">Unallocated</span>
<div style="left:301px;top:572px;width:769px;height:1px;background:#b4b4b4;"></div>
<span class="t" style="left:224px;top:579.5px;font-weight:bold;transform:scaleX(0.9616);">Disk 2</span>
<svg style="left:208.3px;top:583px" width="13" height="8" viewBox="0 0 13 8"><rect x="0.300" y="0.200" width="12.400" height="3.800" rx=".6" fill="#dcdedf"/><rect x="0.300" y="3.500" width="12.400" height="3.400" rx=".4" fill="#2e3236"/><rect x="9.200" y="4.300" width="2.500" height="1.700" fill="#2fd42f"/></svg>
<span class="t" style="left:206px;top:594.5px;transform:scaleX(0.9201);">Basic</span>
<span class="t" style="left:206px;top:609.5px;transform:scaleX(0.8875);">40.00 GB</span>
<span class="t" style="left:206px;top:624.5px;transform:scaleX(1.0090);">Online</span>
<div style="left:300px;top:576px;width:1px;height:97px;background:#9c9c9c;"></div>
<div style="left:197px;top:672px;width:103px;height:1px;background:#9c9c9c;"></div>
<div style="left:302px;top:580px;width:764px;height:13px;background:#000084;"></div>
<div style="left:302px;top:593px;width:764px;height:74px;background:#fff;"></div>
<div style="left:305px;top:596px;width:758px;height:1px;background:#a8a8a8;"></div>
<div style="left:305px;top:596px;width:1px;height:68px;background:#a8a8a8;"></div>
<div style="left:305px;top:663px;width:758px;height:1px;background:#e8e8e8;"></div>
<div style="left:1062px;top:596px;width:1px;height:68px;background:#e8e8e8;"></div>
<div style="left:1067px;top:580px;width:1px;height:87px;background:#a8a8a8;"></div>
<div style="left:301px;top:667px;width:767px;height:1px;background:#a8a8a8;"></div>
<span class="t" style="left:309px;top:596.5px;font-weight:bold;transform:scaleX(1.0022);">New Volume  (D:)</span>
<span class="t" style="left:309px;top:611.5px;transform:scaleX(0.8902);">40.00 GB NTFS</span>
<span class="t" style="left:309px;top:626.5px;transform:scaleX(1.0021);">Healthy (Primary Partition)</span>
<div style="left:301px;top:671px;width:769px;height:1px;background:#b4b4b4;"></div>
<span class="t" style="left:224px;top:678.5px;font-weight:bold;transform:scaleX(0.9616);">Disk 3</span>
<svg style="left:208.3px;top:682px" width="13" height="8" viewBox="0 0 13 8"><rect x="0.300" y="0.200" width="12.400" height="3.800" rx=".6" fill="#dcdedf"/><rect x="0.300" y="3.500" width="12.400" height="3.400" rx=".4" fill="#2e3236"/><rect x="9.200" y="4.300" width="2.500" height="1.700" fill="#2fd42f"/></svg>
<span class="t" style="left:206px;top:693.5px;transform:scaleX(0.9201);">Basic</span>
<span class="t" style="left:206px;top:708.5px;transform:scaleX(0.8875);">39.88 GB</span>
<span class="t" style="left:206px;top:723.5px;transform:scaleX(1.0090);">Online</span>
<div style="left:300px;top:675px;width:1px;height:97px;background:#9c9c9c;"></div>
<div style="left:197px;top:771px;width:103px;height:1px;background:#9c9c9c;"></div>
<div style="left:302px;top:679px;width:764px;height:13px;background:#000;"></div>
<div style="left:302px;top:692px;width:764px;height:74px;background:#fff;"></div>
<div style="left:305px;top:695px;width:758px;height:1px;background:#a8a8a8;"></div>
<div style="left:305px;top:695px;width:1px;height:68px;background:#a8a8a8;"></div>
<div style="left:305px;top:762px;width:758px;height:1px;background:#e8e8e8;"></div>
<div style="left:1062px;top:695px;width:1px;height:68px;background:#e8e8e8;"></div>
<div style="left:1067px;top:679px;width:1px;height:87px;background:#a8a8a8;"></div>
<div style="left:301px;top:766px;width:767px;height:1px;background:#a8a8a8;"></div>
<span class="t" style="left:309px;top:710.5px;transform:scaleX(0.8875);">39.88 GB</span>
<span class="t" style="left:309px;top:725.5px;transform:scaleX(0.9941);">Unallocated</span>
<div style="left:301px;top:770px;width:769px;height:1px;background:#b4b4b4;"></div>
<span class="t" style="left:224px;top:777.5px;font-weight:bold;transform:scaleX(0.9616);">Disk 4</span>
<svg style="left:208.3px;top:781px" width="13" height="8" viewBox="0 0 13 8"><rect x="0.300" y="0.200" width="12.400" height="3.800" rx=".6" fill="#dcdedf"/><rect x="0.300" y="3.500" width="12.400" height="3.400" rx=".4" fill="#2e3236"/><rect x="9.200" y="4.300" width="2.500" height="1.700" fill="#2fd42f"/></svg>
<span class="t" style="left:206px;top:792.5px;transform:scaleX(0.9201);">Basic</span>
<span class="t" style="left:206px;top:807.5px;transform:scaleX(0.8875);">39.88 GB</span>
<span class="t" style="left:206px;top:822.5px;transform:scaleX(1.0090);">Online</span>
<div style="left:300px;top:774px;width:1px;height:97px;background:#9c9c9c;"></div>
<div style="left:197px;top:870px;width:103px;height:1px;background:#9c9c9c;"></div>
<div style="left:302px;top:778px;width:764px;height:13px;background:#000;"></div>
<div style="left:302px;top:791px;width:764px;height:74px;background:#fff;"></div>
<div style="left:305px;top:794px;width:758px;height:1px;background:#a8a8a8;"></div>
<div style="left:305px;top:794px;width:1px;height:68px;background:#a8a8a8;"></div>
<div style="left:305px;top:861px;width:758px;height:1px;background:#e8e8e8;"></div>
<div style="left:1062px;top:794px;width:1px;height:68px;background:#e8e8e8;"></div>
<div style="left:1067px;top:778px;width:1px;height:87px;background:#a8a8a8;"></div>
<div style="left:301px;top:865px;width:767px;height:1px;background:#a8a8a8;"></div>
<span class="t" style="left:309px;top:809.5px;transform:scaleX(0.8875);">39.88 GB</span>
<span class="t" style="left:309px;top:824.5px;transform:scaleX(0.9941);">Unallocated</span>
<div style="left:301px;top:869px;width:769px;height:1px;background:#b4b4b4;"></div>
<span class="t" style="left:224px;top:876.5px;font-weight:bold;transform:scaleX(0.9942);">CD-ROM 0</span>
<svg style="left:208.7px;top:876.5px" width="15" height="15" viewBox="0 0 15 15"><circle cx="9.500" cy="5.300" r="4.900" fill="#d2d4d6" stroke="#8e9296" stroke-width=".8"/><circle cx="9.500" cy="5.300" r="2.400" fill="#eef0f0" stroke="#a2a6aa" stroke-width=".5"/><circle cx="9.500" cy="5.300" r="1" fill="#fff" stroke="#8e9296" stroke-width=".5"/><path d="M1.500 8h6l1.500 2.400h-9z" fill="#d6d8da"/><rect x="0.300" y="10" width="12.400" height="3.800" rx=".5" fill="#34383c"/><rect x="9.300" y="10.900" width="2.400" height="1.700" fill="#2fcf2f"/></svg>
<span class="t" style="left:206px;top:891.5px;transform:scaleX(0.9075);">DVD</span>
<div style="left:300px;top:873px;width:1px;height:41px;background:#9c9c9c;"></div>
<div style="left:302px;top:877px;width:591px;height:13px;background:#000084;"></div>
<div style="left:302px;top:890px;width:591px;height:24px;background:#fff;"></div>
<div style="left:305px;top:893px;width:585px;height:1px;background:#a8a8a8;"></div>
<div style="left:305px;top:893px;width:1px;height:21px;background:#a8a8a8;"></div>
<div style="left:889px;top:893px;width:1px;height:21px;background:#e8e8e8;"></div>
<div style="left:894px;top:877px;width:1px;height:37px;background:#a8a8a8;"></div>
<span class="t" style="left:309px;top:893.5px;font-weight:bold;transform:scaleX(0.9131);">J_CENA_X64FREV_EN-US_DV5  (X:)</span>
<span class="t" style="left:206px;top:906.5px;transform:scaleX(0.8630);clip-path:inset(0 0 12px 0);">3.67 GB</span>
<div style="left:1070px;top:372px;width:17px;height:542px;background:#f3f1f3;"></div>
<div style="left:898px;top:872px;width:1px;height:42px;background:#a0a0a0;"></div>
<div style="left:1071px;top:388px;width:15px;height:338px;background:#cdcdcd;"></div>
<svg style="left:1073px;top:375px" width="11" height="11" viewBox="0 0 11 11"><path d="M2.100 7.300l3.400-3.600 3.400 3.600" stroke="#505050" stroke-width="2" fill="none"/></svg>
<svg style="left:1073px;top:900px" width="11" height="11" viewBox="0 0 11 11"><path d="M2.100 3.700l3.400 3.600 3.400-3.600" stroke="#505050" stroke-width="2" fill="none"/></svg>
<div style="left:197px;top:914px;width:890px;height:20px;background:#f5f3f5;"></div>
<div style="left:197px;top:913px;width:890px;height:1px;background:#fff;"></div>
<div style="left:197px;top:933px;width:890px;height:1px;background:#808080;"></div>
<div style="left:1086px;top:914px;width:1px;height:20px;background:#808080;"></div>
<div style="left:197px;top:934px;width:890px;height:1px;background:#fff;"></div>
<div style="left:203px;top:918px;width:10px;height:12px;background:#000;"></div>
<span class="t" style="left:218px;top:914px;transform:scaleX(0.9941);">Unallocated</span>
<div style="left:287px;top:918px;width:10px;height:12px;background:#000084;"></div>
<span class="t" style="left:302px;top:914px;transform:scaleX(1.0188);">Primary partition</span>
<div style="left:1094px;top:116px;width:186px;height:20px;background:#f5f3f5;"></div>
<div style="left:1094px;top:116px;width:186px;height:1px;background:#fff;"></div>
<div style="left:1094px;top:136px;width:186px;height:1px;background:#909090;"></div>
<span class="t" style="left:1099px;top:116.5px;font-weight:bold;transform:scaleX(0.9315);">Actions</span>
<div style="left:1094px;top:138px;width:186px;height:25px;background:linear-gradient(#b9d1ea,#9ebbdd);"></div>
<span class="t" style="left:1101px;top:140.5px;transform:scaleX(0.9926);">Disk Management</span>
<svg style="left:1263.7px;top:146px" width="10" height="8" viewBox="0 0 10 8"><path d="M0 7l5-5 5 5z" fill="#000"/></svg>
<span class="t" style="left:1125px;top:164.5px;transform:scaleX(1.0234);">More Actions</span>
<svg style="left:1266.6px;top:169px" width="6" height="12" viewBox="0 0 6 12"><path d="M0.300 1.200l5.200 4.800-5.200 4.800z" fill="#000"/></svg>
<div style="left:2px;top:936px;width:1280px;height:1px;background:#d4d4d4;"></div>
<div style="left:1061px;top:938px;width:1px;height:20px;background:#dcdcdc;"></div>
<div style="left:1194px;top:938px;width:1px;height:20px;background:#dcdcdc;"></div>
<div style="left:1279px;top:938px;width:1px;height:20px;background:#dcdcdc;"></div>
<div style="left:2px;top:959px;width:1280px;height:40px;background:#0c121c;"></div>
<div style="left:296px;top:959px;width:48px;height:40px;background:#3b4149;"></div>
<div style="left:251px;top:997px;width:41px;height:2px;background:#8cbfe6;"></div>
<div style="left:296px;top:997px;width:48px;height:2px;background:#a5d0ee;"></div>
<div style="left:1278px;top:959px;width:1px;height:40px;background:#4a5058;"></div>
<span class="t" style="left:1247px;top:968.5px;color:#fff;transform:scaleX(0.8841);">ENG</span>
<svg style="left:18px;top:971px" width="17" height="17" viewBox="0 0 17 17"><path d="M0 2.600L6.900 1.600V8H0zM7.800 1.500L17 0V8H7.800zM0 8.900H6.900V15.400L0 14.400zM7.800 8.900H17V17L7.800 15.500z" fill="#fff"/></svg>
<svg style="left:65px;top:970px" width="18" height="18" viewBox="0 0 18 18"><circle cx="11.300" cy="6.700" r="5.100" fill="none" stroke="#fff" stroke-width="1.100"/><path d="M7.800 10.300L1.200 17" stroke="#fff" stroke-width="1.400"/></svg>
<svg style="left:111px;top:971.5px" width="22" height="15" viewBox="0 0 22 15"><rect x="4.600" y="0.700" width="12.200" height="13.600" fill="none" stroke="#fff" stroke-width="1.100"/><path d="M2.500 3.300H0.700v8.400h1.800M19.500 3.300h1.800v8.400h-1.800" fill="none" stroke="#fff" stroke-width="1.100"/></svg>
<svg style="left:161px;top:966px" width="24" height="24" viewBox="0 0 24 24"><defs><linearGradient id="ieg2" x1="0" y1="0" x2="0" y2="1"><stop offset="0" stop-color="#46b2ec"/><stop offset="1" stop-color="#7ddffb"/></linearGradient></defs><path fill-rule="evenodd" d="M20.980 19.150A9.500 9.500 0 1 1 22.670 14.500H8.260A5 5 0 0 0 17.300 16.570ZM8.810 11.300A5 5 0 0 1 17.590 11.300Z" fill="url(#ieg2)"/><path d="M4.600 23.800C1.500 23 0 21 .9 18.300 2 13 4 10 5.500 8.100 9 4 14 1 17.300 1.400 20 1.200 22.500 2 22.400 3.600L22 5.800C21.800 4 20.500 3 18 3.200 14 3.600 10 6.500 7.800 9.700 5 13.500 3.500 16 3.300 18.500 3.100 20.500 3.800 22 5.800 22.400Z" fill="#f0cf4a"/></svg>
<svg style="left:211px;top:969px" width="23" height="19" viewBox="0 0 23 19"><path d="M0.500 1.500h7l1.500 1.800h13.500v15.200h-22z" fill="#f3d27a"/><path d="M0.500 4.500h22v14h-22z" fill="#fbe6a2"/><path d="M1 2h6.500l1 1.300H1z" fill="#e9b84a"/><path d="M5.500 18.500v-7.500h12v7.500h-3.500v-4h-5v4z" fill="#3c9fdc"/><path d="M5.500 11h12l-1.500 2h-9z" fill="#2a7fc0"/></svg>
<svg style="left:259px;top:967px" width="25" height="24" viewBox="0 0 25 24"><rect x="0.800" y="0.800" width="11.400" height="20.400" fill="#1e90dc" stroke="#fff" stroke-width="1.200"/><path d="M1.500 7.500h10" stroke="#0a5a9c" stroke-width="1"/><path d="M8.500 12.500v-2.300h8v2.300" fill="none" stroke="#fff" stroke-width="1.200"/><rect x="4.800" y="12.500" width="19.400" height="10.700" rx="1" fill="#74909e" stroke="#fff" stroke-width="1.200"/><path d="M5.500 16.500h18" stroke="#dfe8ec" stroke-width="1"/><rect x="8" y="15" width="2" height="3" fill="#dfe8ec"/><rect x="19" y="15" width="2" height="3" fill="#dfe8ec"/></svg>
<svg style="left:308px;top:967px" width="24" height="23" viewBox="0 0 24 23"><path d="M8 1l14.500 1.200-1 13H9.500z" fill="#dfe3ee" stroke="#a2a8b8" stroke-width=".6"/><path d="M9.300 2.200l12 1-0.800 10.800H10.500z" fill="#1a2fc0"/><path d="M15 2.700l6.300.5-.8 10.800h-2.500z" fill="#a8bcf0"/><path d="M9.300 2.200l4 .3 2.500 8-3 3.500h-2.300z" fill="#0a1478"/><path d="M0.500 11.500l4-5h5l2 7.500 6 0 2.500-2 .5 7.500-3 3.500H2z" fill="#c6cacc" stroke="#8a9094" stroke-width=".6"/><path d="M0.500 11.500h16.500l3-2.500" fill="none" stroke="#eef0f0" stroke-width="1"/><path d="M2 15h14v7H2z" fill="#aeb4b8"/><rect x="3.500" y="16.500" width="3" height="2" fill="#4a5056"/><rect x="8" y="16.500" width="3" height="2" fill="#4a5056"/><rect x="12.500" y="16.500" width="3" height="2" fill="#4a5056"/></svg>
<svg style="left:1221px;top:973px" width="17" height="14" viewBox="0 0 17 14"><rect x="2.800" y="0.600" width="13.400" height="9" fill="none" stroke="#fff" stroke-width="1"/><rect x="0.600" y="0.600" width="4.600" height="4.200" fill="#0c121c" stroke="#fff" stroke-width="1"/><path d="M2 2.200l.9 1 .9-1" stroke="#fff" stroke-width=".8" fill="none"/><path d="M2.800 5v8.500M9.500 9.800v3M6 13h7" stroke="#fff" stroke-width="1" fill="none"/></svg>
<div style="left:410px;top:431px;width:482px;height:193px;background:#fff;box-shadow:0 0 0 1px #4b7b90 inset, 0 0 0 2px #e8f8fd inset;"></div>
<div style="left:412px;top:574px;width:478px;height:48px;background:#f5f3f5;"></div>
<span class="t" style="left:419px;top:437px;transform:scaleX(0.9926);">Disk Management</span>
<svg style="left:869px;top:439px" width="14" height="14" viewBox="0 0 14 14"><path d="M2 2l10 10M12 2l-10 10" stroke="#a4a4a4" stroke-width="1" fill="none"/></svg>
<svg style="left:434.7px;top:489.7px" width="32" height="30" viewBox="0 0 32 30"><defs><linearGradient id="wg" x1="0.200" y1="0" x2="0.900" y2="1"><stop offset="0" stop-color="#fbe83c"/><stop offset=".5" stop-color="#f7cf18"/><stop offset="1" stop-color="#f2a40a"/></linearGradient></defs><path d="M16 1.600L30.900 28.200H1.100z" fill="#ececec" stroke="#b0b0b0" stroke-width="1" stroke-linejoin="round"/><path d="M16 4.200L28.700 26.900H3.300z" fill="url(#wg)" stroke="#d8a21a" stroke-width=".6" stroke-linejoin="round"/><path d="M14.100 9.500h3.800l-.5 10.600h-2.800z" fill="#2a2410"/><ellipse cx="16" cy="23.400" rx="2" ry="1.700" fill="#2a2410"/></svg>
<span class="t" style="left:476px;top:485.5px;transform:scaleX(0.9865);">The operation you selected will convert the selected basic disk(s) to</span>
<span class="t" style="left:476px;top:500.5px;transform:scaleX(1.0033);">dynamic disk(s). If you convert the disk(s) to dynamic, you will not be</span>
<span class="t" style="left:476px;top:515.5px;transform:scaleX(0.9943);">able to start installed operating systems from any volume on the disk(s)</span>
<span class="t" style="left:476px;top:530.5px;transform:scaleX(1.0003);">(except the current boot volume). Are you sure you want to continue?</span>
<div style="left:686px;top:586px;width:88px;height:26px;background:#646464;"></div>
<div style="left:687px;top:587px;width:86px;height:24px;background:#696969;"></div>
<div style="left:687px;top:587px;width:85px;height:23px;background:#fff;"></div>
<div style="left:688px;top:588px;width:84px;height:22px;background:#a0a0a0;"></div>
<div style="left:688px;top:588px;width:83px;height:21px;background:#f5f3f5;"></div>
<div style="left:690px;top:590px;width:80px;height:18px;border:1px dotted #000;box-sizing:border-box;"></div>
<span class="t" style="left:721px;top:588.5px;transform:scaleX(0.8683);">Yes</span>
<div style="left:784px;top:586px;width:88px;height:26px;background:#696969;"></div>
<div style="left:784px;top:586px;width:87px;height:25px;background:#fff;"></div>
<div style="left:785px;top:587px;width:86px;height:24px;background:#a0a0a0;"></div>
<div style="left:785px;top:587px;width:85px;height:23px;background:#f5f3f5;"></div>
<span class="t" style="left:820.5px;top:588.5px;transform:scaleX(1.0102);">No</span>
</div></body></html>
